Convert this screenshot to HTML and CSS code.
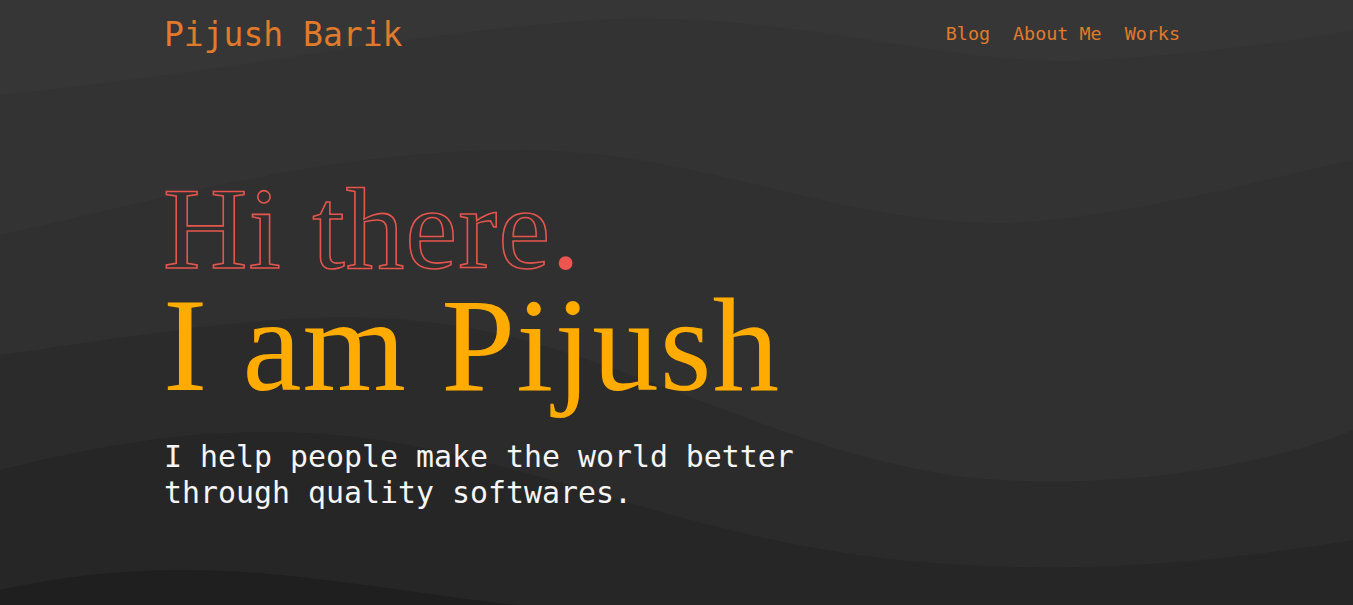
FILE: index.html
```html
<!DOCTYPE html>
<html lang="en">
<head>
<meta charset="utf-8">
<title>Pijush Barik</title>
<link rel="stylesheet" href="styles.css">
</head>
<body>
<div class="page">
  <svg class="waves" viewBox="0 0 1353 605" preserveAspectRatio="none" aria-hidden="true">
    <rect width="1353" height="605" fill="#363636"/>
    <path d="M0,95 C250,70 420,30 600,20 C800,10 950,70 1100,60 C1220,52 1300,40 1353,30 L1353,605 L0,605 Z" fill="#333333"/>
    <path d="M0,235 C160,200 330,150 520,150 C720,150 860,240 1050,220 C1180,205 1280,175 1353,160 L1353,605 L0,605 Z" fill="#303030"/>
    <path d="M0,355 C180,330 330,300 480,330 C650,365 820,470 1000,480 C1150,488 1280,460 1353,430 L1353,605 L0,605 Z" fill="#2b2b2b"/>
    <path d="M0,470 C120,440 240,420 380,440 C560,470 700,540 900,560 C1080,578 1230,560 1353,540 L1353,605 L0,605 Z" fill="#262626"/>
    <path d="M0,590 C90,570 180,565 280,575 C380,585 460,600 520,605 L0,605 Z" fill="#1f1f1f"/>
  </svg>
  <div class="container">
    <header class="header">
      <a class="logo" href="#">Pijush Barik</a>
      <nav class="nav">
        <a href="#">Blog</a>
        <a href="#">About Me</a>
        <a href="#">Works</a>
      </nav>
    </header>
    <main class="hero">
      <h1 class="greet">Hi there<span class="dot">.</span></h1>
      <h2 class="name">I am Pijush</h2>
      <p class="tagline">I help people make the world better<br>through quality softwares.</p>
    </main>
  </div>
</div>
</body>
</html>
```
FILE: styles.css
```css
html, body {
  margin: 0;
  padding: 0;
  background: #2c2c2c;
}
.page {
  position: relative;
  width: 100%;
  height: 605px;
  overflow: hidden;
}
.waves {
  position: absolute;
  inset: 0;
  width: 100%;
  height: 100%;
  z-index: 0;
}
.container {
  position: relative;
  z-index: 1;
  width: 1027px;
  margin: 0 auto;
  box-sizing: border-box;
}
.header {
  display: flex;
  justify-content: space-between;
  align-items: flex-start;
  padding-top: 18px;
  padding-right: 10px;
}
.logo {
  font-family: "DejaVu Sans Mono", monospace;
  font-size: 33px;
  line-height: 1;
  color: #e27a2b;
  text-decoration: none;
  margin-left: 1px;
}
.nav {
  display: flex;
  gap: 23px;
  padding-top: 7px;
}
.nav a {
  font-family: "DejaVu Sans Mono", monospace;
  font-size: 18.4px;
  line-height: 1;
  color: #e27a2b;
  text-decoration: none;
}
.nav a:first-child {
  margin-left: -2px;
}
.hero {
  margin-top: 128px;
}
.greet {
  margin: 0;
  font-family: "Liberation Serif", serif;
  font-weight: 400;
  font-size: 117px;
  line-height: 100px;
  letter-spacing: 1px;
  color: transparent;
  -webkit-text-stroke: 1.6px #e5554d;
}
.dot {
  color: #ee5550;
  -webkit-text-stroke: 0;
}
.name {
  margin: 0;
  font-family: "Liberation Serif", serif;
  font-weight: 400;
  font-size: 133px;
  line-height: 133px;
  letter-spacing: 1px;
  color: #ffab00;
}
.tagline {
  margin: 27px 0 0 1px;
  font-family: "DejaVu Sans Mono", monospace;
  font-size: 29.9px;
  line-height: 36px;
  color: #f5f5f5;
}
```
